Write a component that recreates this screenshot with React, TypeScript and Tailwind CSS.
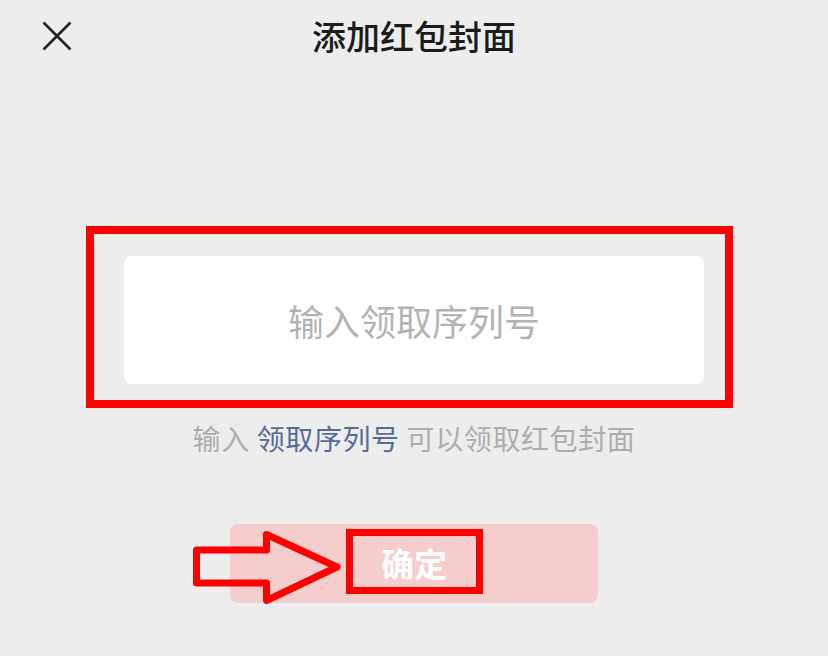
import React from "react";

export default function App() {
  return (
    <div className="relative w-[828px] h-[656px] bg-[#ededed] font-['Noto_Sans_CJK_SC','Noto_Sans',sans-serif] overflow-hidden">
      {/* Header */}
      <div className="grid grid-cols-[1fr_auto_1fr] items-center h-[72px]">
        <div className="pl-[42px] flex items-center">
          <svg width="30" height="30" viewBox="0 0 30 30" fill="none">
            <path d="M1.5 1.5 L28.5 28.5 M28.5 1.5 L1.5 28.5" stroke="#222" strokeWidth="2.6" strokeLinecap="butt" />
          </svg>
        </div>
        <div className="text-[34px] leading-none font-medium text-[#1b1b1b]">添加红包封面</div>
        <div />
      </div>

      {/* Input highlighted box */}
      <div className="mt-[154px] ml-[86px] w-[647px] border-[8px] border-[#ff0000] pt-[22px] pb-[16px] pl-[30px] pr-[21px]">
        <div className="h-[128px] rounded-[8px] bg-white flex items-center justify-center">
          <span className="text-[36px] leading-none text-[#b3b3b3]">输入领取序列号</span>
        </div>
      </div>

      {/* Helper text */}
      <div className="mt-[16px] flex justify-center text-[28px] leading-none text-[#adadad] whitespace-pre tracking-[0.6px]">
        <span>输入 </span>
        <span className="text-[#576b95]">领取序列号</span>
        <span> 可以领取红包封面</span>
      </div>

      {/* Button */}
      <div className="relative mt-[72px] mx-auto w-[368px] h-[79px] rounded-[8px] bg-[#f6cdcd] flex items-center justify-center">
        <span className="text-[33px] leading-none font-bold text-white">确定</span>
        <div className="absolute left-[116px] top-[5px] w-[137px] h-[65px] border-[7px] border-[#ff0000]" />
      </div>

      {/* Arrow annotation */}
      <svg className="absolute left-[190px] top-[527px]" width="160" height="82" viewBox="0 0 160 82" fill="none">
        <path
          d="M6.5 23 L76.5 23 L76.5 7.5 L147 40 L76.5 73.5 L76.5 56 L6.5 56 Z"
          stroke="#ff0000"
          strokeWidth="7"
          strokeLinejoin="round"
        />
      </svg>
    </div>
  );
}
